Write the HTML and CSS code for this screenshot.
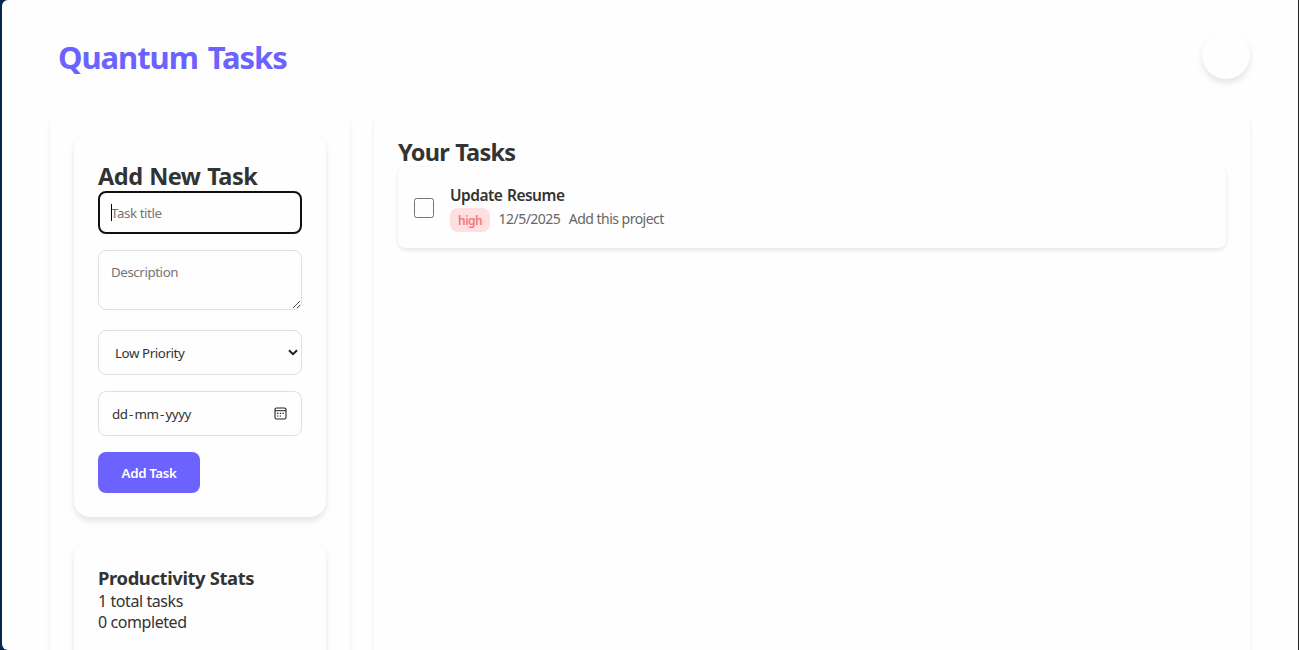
FILE: index.html
```html
<!DOCTYPE html>
<html lang="en">
<head>
<meta charset="utf-8">
<title>Quantum Tasks</title>
<link rel="stylesheet" href="styles.css">
</head>
<body>
<div class="page">
  <header class="header">
    <h1 class="brand">Quantum Tasks</h1>
    <button class="theme-toggle" aria-label="Toggle theme"></button>
  </header>
  <div class="layout">
    <aside class="panel sidebar">
      <section class="card form-card">
        <h2 class="heading">Add New Task</h2>
        <div class="field field-title"><i class="caret"></i><span class="placeholder">Task title</span></div>
        <div class="field field-desc"><span class="placeholder">Description</span>
          <svg class="grip" width="9" height="9" viewBox="0 0 9 9"><path d="M1 8 8 1M5 8 8 5" stroke="#555" fill="none"/></svg>
        </div>
        <div class="field field-select"><span>Low Priority</span>
          <svg width="10" height="7" viewBox="0 0 10 7"><path d="M1 1.2 5 5.2 9 1.2" fill="none" stroke="#222" stroke-width="2"/></svg>
        </div>
        <div class="field field-date"><span>dd<b>-</b>mm<b>-</b>yyyy</span>
          <svg width="13" height="13" viewBox="0 0 13 13"><rect x="1" y="1" width="11" height="11" rx="1.6" fill="none" stroke="#222" stroke-width="1.1"/><path d="M1 3.7h11" stroke="#222"/><path d="M5.8 6.4h1.3M8.5 6.4h1.3M3.1 9h1.3M5.8 9h1.3M3.1 6.4h1.3" stroke="#222" stroke-width="1.2"/></svg>
        </div>
        <button class="submit">Add Task</button>
      </section>
      <section class="card stats">
        <h3 class="stats-title">Productivity Stats</h3>
        <p>1 total tasks</p>
        <p>0 completed</p>
      </section>
    </aside>
    <main class="panel tasks">
      <h2 class="heading heading-list">Your Tasks</h2>
      <article class="task">
        <span class="checkbox"></span>
        <div class="task-body">
          <div class="task-name">Update Resume</div>
          <div class="meta"><span class="badge">high</span><span>12/5/2025</span><span>Add this project</span></div>
        </div>
      </article>
    </main>
  </div>
</div>
</body>
</html>
```
FILE: styles.css
```css
* { box-sizing: border-box; margin: 0; padding: 0; }
html { background: #04284a; }
body {
  height: 650px;
  overflow: hidden;
  color: #333;
  font: 16px/21px "Noto Sans", "Open Sans", sans-serif;
  white-space: nowrap;
}
.page {
  height: 650px;
  margin-left: 2px;
  padding: 31px 48px 0;
  background: #fefefe;
  border-right: 1px solid #222;
  border-radius: 6px 0 0 6px;
  overflow: hidden;
}
.header { display: flex; justify-content: space-between; padding-left: 8px; height: 79px; }
.brand { color: #6c63ff; font-size: 31px; line-height: 53px; letter-spacing: -1.05px; word-spacing: 2.8px; }
.theme-toggle {
  width: 48px; height: 48px; border: 0; border-radius: 50%;
  background: #fefefe; box-shadow: 0 4px 6px rgba(0, 0, 0, .1);
}
.layout { display: grid; grid-template-columns: 300px 1fr; gap: 24px; }
.panel { height: 700px; padding: 24px; border-radius: 16px; box-shadow: 0 4px 6px rgba(0, 0, 0, .05), 0 0 4px rgba(0, 0, 0, .02); }
.card { padding: 24px; border-radius: 16px; box-shadow: 0 4px 6px rgba(0, 0, 0, .1); }
.form-card { height: 383px; margin-bottom: 24px; }
.heading { font-size: 23.5px; line-height: 36px; height: 33px; letter-spacing: -.48px; word-spacing: 1px; }
.heading-list { letter-spacing: -.78px; }
.field {
  position: relative; display: flex; align-items: center;
  width: 204px; padding: 0 12px; margin-bottom: 16px;
  border: 1px solid #e0e0e0; border-radius: 8px;
  font-size: 13.333px; letter-spacing: -.42px;
}
.placeholder { color: #757575; }
.field-title { height: 43px; border: 2px solid #101010; padding: 2px 11px 0; }
.caret { position: absolute; left: 11px; top: 11px; width: 1px; height: 17px; background: #000; }
.field-desc { height: 60px; margin-bottom: 20px; padding-top: 11px; align-items: flex-start; }
.grip { position: absolute; right: 0; bottom: 0; }
.field-select { height: 45px; padding: 0 3px 0 16px; justify-content: space-between; }
.field-date { height: 45px; padding: 0 14px 0 13px; justify-content: space-between; }
.field-select span, .field-date span { padding-top: 2px; }
.field-date b { font-weight: 400; padding: 0 1.5px; }
.submit {
  width: 102px; height: 41px; padding-top: 1px;
  border: 0; border-radius: 8px; background: #6c63ff; color: #fff;
  font: 600 13.333px/41px "Noto Sans", "Open Sans", sans-serif; letter-spacing: -.38px;
}
.stats { height: 200px; letter-spacing: -.42px; }
.stats-title { font-size: 18.4px; line-height: 26px; letter-spacing: -.38px; }
.task {
  display: flex; align-items: center; gap: 16px; height: 81px; padding: 16px;
  border-radius: 8px; box-shadow: 0 2px 4px rgba(0, 0, 0, .1);
}
.checkbox { width: 20px; height: 20px; border: 1px solid #767676; border-radius: 2.5px; }
.task-name { font-size: 15.5px; font-weight: 600; line-height: 22px; margin-bottom: 2px; letter-spacing: -.5px; word-spacing: 1px; }
.meta { display: flex; gap: 8.5px; font-size: 14px; line-height: 21px; letter-spacing: -.52px; color: #666; }
.badge {
  height: 24px; width: 40px; padding: 0 8px; border-radius: 8px;
  background: #ffe0e0; color: #f8777b;
  font-size: 12px; line-height: 26px; font-weight: 600; letter-spacing: -.5px;
}
```
